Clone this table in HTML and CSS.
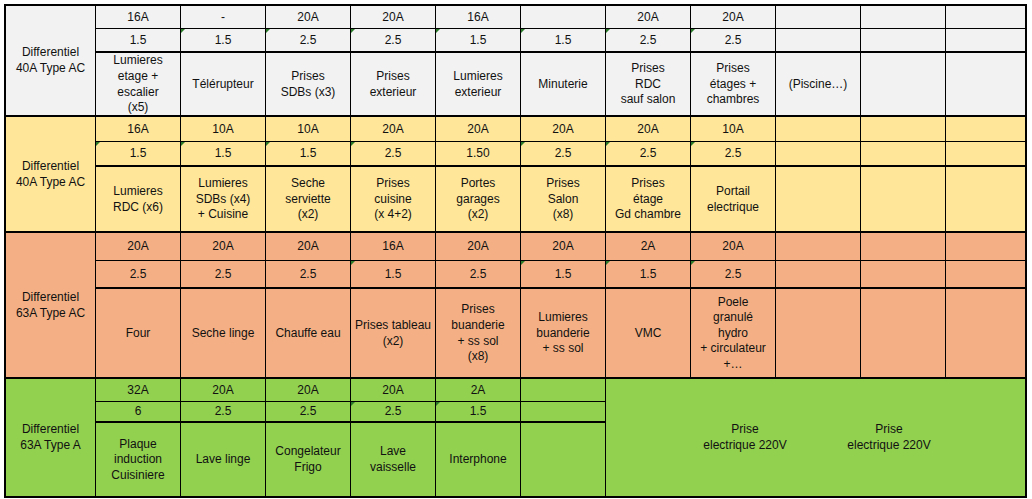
FILE: index.html
```html
<!DOCTYPE html>
<html lang="fr">
<head>
<meta charset="utf-8">
<title>Tableau électrique</title>
<link rel="stylesheet" href="styles.css">
</head>
<body>
<div class="sheet">
  <section class="sec sec-gray">
    <div class="cell label">Differentiel<br>40A Type AC</div>
    <div class="cell">16A</div><div class="cell">-</div><div class="cell">20A</div><div class="cell">20A</div><div class="cell">16A</div><div class="cell"></div><div class="cell">20A</div><div class="cell">20A</div><div class="cell"></div><div class="cell"></div><div class="cell"></div>
    <div class="cell r2">1.5</div><div class="cell r2 flag">1.5</div><div class="cell r2 flag">2.5</div><div class="cell r2 flag">2.5</div><div class="cell r2 flag">1.5</div><div class="cell r2 flag">1.5</div><div class="cell r2 flag">2.5</div><div class="cell r2 flag">2.5</div><div class="cell r2"></div><div class="cell r2"></div><div class="cell r2"></div>
    <div class="cell r3">Lumieres<br>etage +<br>escalier<br>(x5)</div><div class="cell r3">Télérupteur</div><div class="cell r3">Prises<br>SDBs (x3)</div><div class="cell r3">Prises<br>exterieur</div><div class="cell r3">Lumieres<br>exterieur</div><div class="cell r3">Minuterie</div><div class="cell r3">Prises<br>RDC<br>sauf salon</div><div class="cell r3">Prises<br>étages +<br>chambres</div><div class="cell r3">(Piscine…)</div><div class="cell r3"></div><div class="cell r3"></div>
  </section>

  <section class="sec sec-yellow">
    <div class="cell label">Differentiel<br>40A Type AC</div>
    <div class="cell">16A</div><div class="cell">10A</div><div class="cell">10A</div><div class="cell">20A</div><div class="cell">20A</div><div class="cell">20A</div><div class="cell">20A</div><div class="cell">10A</div><div class="cell"></div><div class="cell"></div><div class="cell"></div>
    <div class="cell r2 flag">1.5</div><div class="cell r2 flag">1.5</div><div class="cell r2 flag">1.5</div><div class="cell r2 flag">2.5</div><div class="cell r2">1.50</div><div class="cell r2 flag">2.5</div><div class="cell r2 flag">2.5</div><div class="cell r2 flag">2.5</div><div class="cell r2"></div><div class="cell r2"></div><div class="cell r2"></div>
    <div class="cell r3">Lumieres<br>RDC (x6)</div><div class="cell r3">Lumieres<br>SDBs (x4)<br>+ Cuisine</div><div class="cell r3">Seche<br>serviette<br>(x2)</div><div class="cell r3">Prises<br>cuisine<br>(x 4+2)</div><div class="cell r3">Portes<br>garages<br>(x2)</div><div class="cell r3">Prises<br>Salon<br>(x8)</div><div class="cell r3">Prises<br>étage<br>Gd chambre</div><div class="cell r3">Portail<br>electrique</div><div class="cell r3"></div><div class="cell r3"></div><div class="cell r3"></div>
  </section>

  <section class="sec sec-orange">
    <div class="cell label">Differentiel<br>63A Type AC</div>
    <div class="cell">20A</div><div class="cell">20A</div><div class="cell">20A</div><div class="cell">16A</div><div class="cell">20A</div><div class="cell">20A</div><div class="cell">2A</div><div class="cell">20A</div><div class="cell"></div><div class="cell"></div><div class="cell"></div>
    <div class="cell r2">2.5</div><div class="cell r2">2.5</div><div class="cell r2">2.5</div><div class="cell r2 flag">1.5</div><div class="cell r2">2.5</div><div class="cell r2 flag">1.5</div><div class="cell r2 flag">1.5</div><div class="cell r2 flag">2.5</div><div class="cell r2"></div><div class="cell r2"></div><div class="cell r2"></div>
    <div class="cell r3">Four</div><div class="cell r3">Seche linge</div><div class="cell r3">Chauffe eau</div><div class="cell r3">Prises tableau<br>(x2)</div><div class="cell r3">Prises<br>buanderie<br>+ ss sol<br>(x8)</div><div class="cell r3">Lumieres<br>buanderie<br>+ ss sol</div><div class="cell r3">VMC</div><div class="cell r3">Poele<br>granulé<br>hydro<br>+ circulateur<br>+…</div><div class="cell r3"></div><div class="cell r3"></div><div class="cell r3"></div>
  </section>

  <section class="sec sec-green">
    <div class="cell label">Differentiel<br>63A Type A</div>
    <div class="cell">32A</div><div class="cell">20A</div><div class="cell">20A</div><div class="cell">20A</div><div class="cell">2A</div><div class="cell"></div>
    <div class="cell merged">
      <div class="note">Prise<br>electrique 220V</div>
      <div class="note">Prise<br>electrique 220V</div>
    </div>
    <div class="cell r2">6</div><div class="cell r2">2.5</div><div class="cell r2">2.5</div><div class="cell r2 flag">2.5</div><div class="cell r2 flag">1.5</div><div class="cell r2"></div>
    <div class="cell r3">Plaque<br>induction<br>Cuisiniere</div><div class="cell r3">Lave linge</div><div class="cell r3">Congelateur<br>Frigo</div><div class="cell r3">Lave<br>vaisselle</div><div class="cell r3">Interphone</div><div class="cell r3"></div>
  </section>
</div>
</body>
</html>
```

FILE: styles.css
```css
html, body {
  margin: 0;
  padding: 0;
  background: #ffffff;
}

body {
  font-family: "Liberation Sans", Arial, sans-serif;
  font-size: 12px;
  color: #111;
}

.sheet {
  margin: 4px 0 0 4px;
  width: fit-content;
  border-top: 2px solid #000;
  border-left: 2px solid #000;
  border-right: 1px solid #000;
}

.sec {
  display: grid;
  grid-template-columns: 90px repeat(10, 85px) 80px;
}

.sec-gray   { background: #f2f2f2; grid-template-rows: 23px 24px 64px; }
.sec-yellow { background: #ffe699; grid-template-rows: 25px 25px 66px; }
.sec-orange { background: #f4b084; grid-template-rows: 28px 28px 90px; }
.sec-green  { background: #92d050; grid-template-rows: 23px 21px 75px; }

.cell {
  position: relative;
  box-sizing: border-box;
  border-right: 1px solid #000;
  border-bottom: 1px solid #000;
  display: flex;
  align-items: center;
  justify-content: center;
  text-align: center;
  line-height: 15.6px;
  padding-top: 1px;
  white-space: nowrap;
  overflow: hidden;
}

.label {
  grid-row: span 3;
  border-bottom-width: 2px;
}

.r2, .r3 {
  border-bottom-width: 2px;
}

.flag::before {
  content: "";
  position: absolute;
  left: -1px;
  top: 0;
  border-top: 5px solid #2a7a2a;
  border-right: 5px solid transparent;
}

.merged {
  grid-column: span 5;
  grid-row: span 3;
  border-bottom-width: 2px;
  justify-content: flex-start;
  padding-left: 89px;
  gap: 44px;
}

.note {
  width: 100px;
  text-align: center;
}
```
